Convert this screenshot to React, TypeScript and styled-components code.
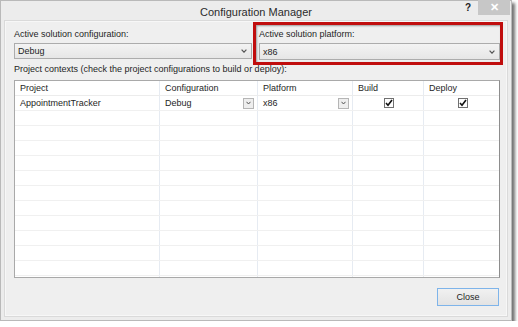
import React from 'react';
import styled, { createGlobalStyle } from 'styled-components';

const GlobalStyle = createGlobalStyle`
  html, body {
    margin: 0;
    padding: 0;
    background: #ffffff;
  }
  body {
    font-family: "Liberation Sans", Arial, sans-serif;
    color: #1e1e1e;
  }
`;

const Window = styled.div`
  width: 510px;
  height: 319px;
  background: #ececec;
  border: 1px solid #b9b9b9;
  box-shadow: 3px 3px 3px rgba(0, 0, 0, 0.55);
  display: flex;
  flex-direction: column;
`;

const TitleBar = styled.div`
  height: 20px;
  display: flex;
  align-items: center;
  position: relative;
  justify-content: center;
`;

const Title = styled.div`
  font-size: 11px;
  color: #2b2b2b;
  margin-top: 1px;
`;

const TitleButtons = styled.div`
  position: absolute;
  right: 1px;
  top: -1px;
  display: flex;
  align-items: stretch;
  height: 15px;
`;

const HelpButton = styled.div`
  width: 20px;
  font-size: 10px;
  font-weight: bold;
  color: #222;
  display: flex;
  align-items: center;
  justify-content: center;
`;

const CloseX = styled.div`
  width: 32px;
  background: #c7c7c7;
  color: #ffffff;
  font-size: 11px;
  font-weight: bold;
  display: flex;
  align-items: center;
  justify-content: center;
`;

const Client = styled.div`
  flex: 1;
  margin: 0 4px 4px 4px;
  border: 1px solid #f7f7f7;
  outline: 1px solid #dadada;
  background: #efefef;
  padding: 6px 6px 9px 8px;
  display: flex;
  flex-direction: column;
`;

const TopRow = styled.div`
  display: grid;
  grid-template-columns: 238px 241px;
  column-gap: 7px;
`;

const Field = styled.div<{ $highlight?: boolean }>`
  position: relative;
  display: flex;
  flex-direction: column;
  gap: 3px;
  ${(p) =>
    p.$highlight &&
    `
    &::after {
      content: '';
      position: absolute;
      left: -6px;
      top: -6px;
      right: -3px;
      bottom: -5px;
      border: 3px solid #c00d0d;
      box-shadow: inset 1px 1px 2px rgba(0,0,0,0.35);
      pointer-events: none;
    }
  `}
`;

const Label = styled.div`
  font-size: 9px;
  line-height: 12px;
  color: #1e1e1e;
`;

const Combo = styled.div<{ $h?: number }>`
  height: ${(p) => p.$h ?? 14}px;
  border: 1px solid #acacac;
  background: linear-gradient(#f3f3f3, #e6e6e6);
  display: flex;
  align-items: center;
  justify-content: space-between;
  padding: 0 4px 0 3px;
  font-size: 9px;
`;

const Chevron = () => (
  <svg width="6" height="4" viewBox="0 0 6 4">
    <path d="M0.6 0.7 L3 3.2 L5.4 0.7" fill="none" stroke="#555" strokeWidth="1.2" />
  </svg>
);

const Caption = styled.div`
  margin-top: 3px;
  font-size: 9px;
  line-height: 12px;
`;

const Grid = styled.div`
  margin-top: 5px;
  height: 196px;
  overflow: hidden;
  background: #ffffff;
  border: 1px solid #a9a9a9;
  border-right-color: #8d8d8d;
`;

const Row = styled.div<{ $header?: boolean }>`
  display: grid;
  grid-template-columns: 145px 98px 95px 71px 1fr;
  height: 15px;
  border-bottom: 1px solid ${(p) => (p.$header ? '#ececec' : '#f0f0f0')};
  box-sizing: border-box;
`;

const Cell = styled.div<{ $center?: boolean }>`
  border-right: 1px solid #e6ebf2;
  display: flex;
  align-items: center;
  justify-content: ${(p) => (p.$center ? 'center' : 'space-between')};
  padding: 0 3px 0 5px;
  font-size: 9px;
  overflow: hidden;
  white-space: nowrap;
  &:last-child {
    border-right: none;
  }
`;

const MiniDrop = styled.div`
  width: 9px;
  height: 9px;
  border: 1px solid #b5b5b5;
  background: #eeeeee;
  display: flex;
  align-items: center;
  justify-content: center;
`;

const Check = styled.div`
  width: 8px;
  height: 8px;
  border: 1px solid #707070;
  background: #fdfdfd;
  display: flex;
  align-items: center;
  justify-content: center;
`;

const Footer = styled.div`
  margin-top: auto;
  display: flex;
  justify-content: flex-end;
  padding-right: 1px;
`;

const Button = styled.div`
  width: 60px;
  height: 16px;
  border: 1px solid #7eb4ea;
  background: linear-gradient(#f1f1f1, #e3e3e3);
  font-size: 9px;
  display: flex;
  align-items: center;
  justify-content: center;
`;

const CheckMark = () => (
  <svg width="8" height="8" viewBox="0 0 8 8">
    <path d="M1 4 L3 6.3 L7 1" fill="none" stroke="#111" strokeWidth="1.6" />
  </svg>
);

const SmallChevron = () => (
  <svg width="5" height="4" viewBox="0 0 5 4">
    <path d="M0.5 0.8 L2.5 3 L4.5 0.8" fill="none" stroke="#555" strokeWidth="1" />
  </svg>
);

const emptyRows = Array.from({ length: 12 });

export default function App() {
  return (
    <>
      <GlobalStyle />
      <Window>
        <TitleBar>
          <Title>Configuration Manager</Title>
          <TitleButtons>
            <HelpButton>?</HelpButton>
            <CloseX>✕</CloseX>
          </TitleButtons>
        </TitleBar>
        <Client>
          <TopRow>
            <Field>
              <Label>Active solution configuration:</Label>
              <Combo $h={14}>
                <span>Debug</span>
                <Chevron />
              </Combo>
            </Field>
            <Field $highlight>
              <Label>Active solution platform:</Label>
              <Combo $h={15}>
                <span>x86</span>
                <Chevron />
              </Combo>
            </Field>
          </TopRow>
          <Caption>Project contexts (check the project configurations to build or deploy):</Caption>
          <Grid>
            <Row $header>
              <Cell>Project</Cell>
              <Cell>Configuration</Cell>
              <Cell>Platform</Cell>
              <Cell>Build</Cell>
              <Cell>Deploy</Cell>
            </Row>
            <Row>
              <Cell>AppointmentTracker</Cell>
              <Cell>
                <span>Debug</span>
                <MiniDrop><SmallChevron /></MiniDrop>
              </Cell>
              <Cell>
                <span>x86</span>
                <MiniDrop><SmallChevron /></MiniDrop>
              </Cell>
              <Cell $center><Check><CheckMark /></Check></Cell>
              <Cell $center><Check><CheckMark /></Check></Cell>
            </Row>
            {emptyRows.map((_, i) => (
              <Row key={i}>
                <Cell />
                <Cell />
                <Cell />
                <Cell />
                <Cell />
              </Row>
            ))}
          </Grid>
          <Footer>
            <Button>Close</Button>
          </Footer>
        </Client>
      </Window>
    </>
  );
}
